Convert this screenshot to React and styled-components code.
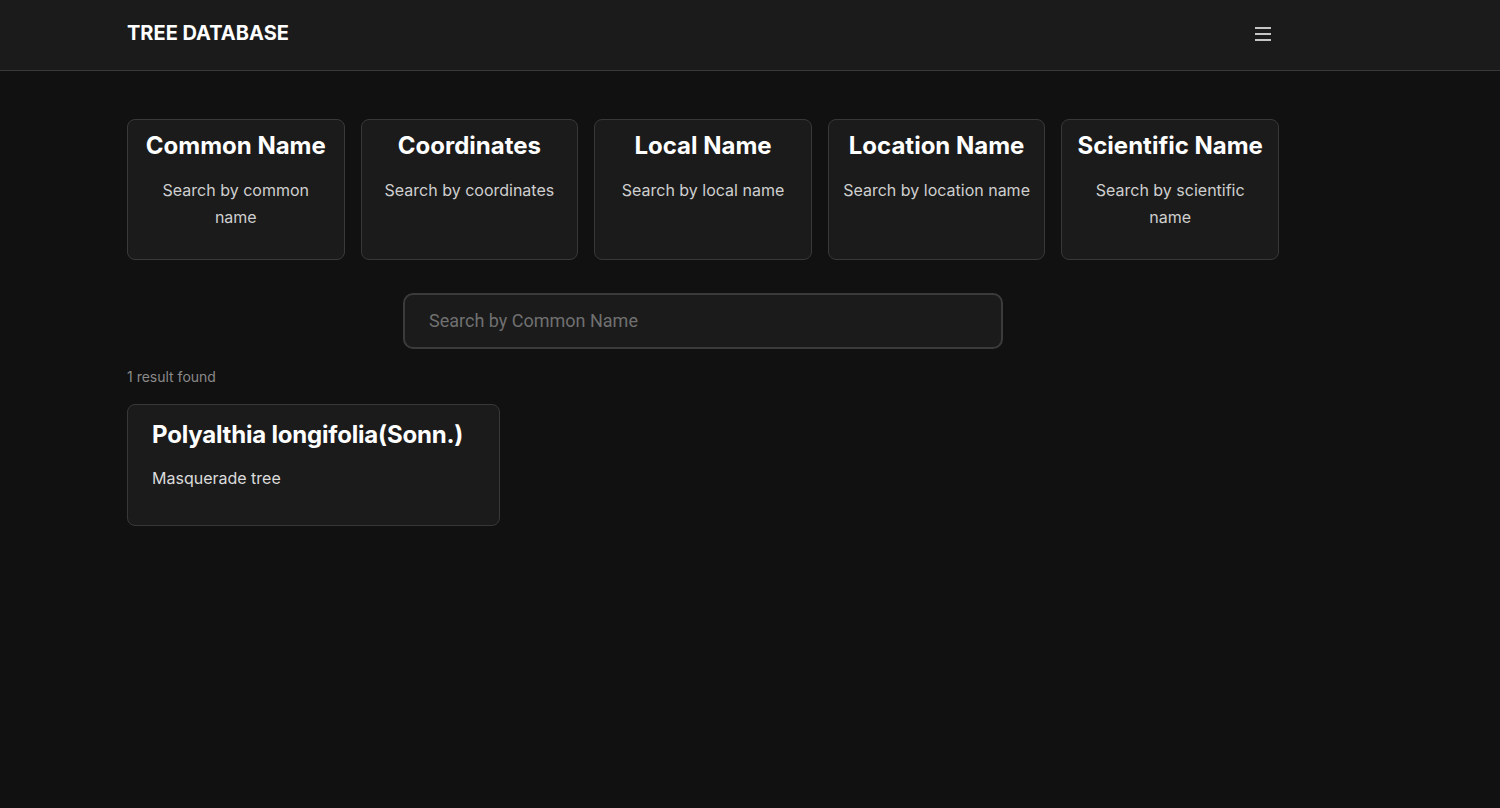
import React, {useState} from 'react';
import styled, {createGlobalStyle} from 'styled-components';

const GlobalStyle = createGlobalStyle`
  * { box-sizing: border-box; }
  html, body {
    margin: 0;
    padding: 0;
    background: #111111;
    color: #ffffff;
    font-family: 'Inter', 'Noto Sans', sans-serif;
  }
`;

const Page = styled.div`
  min-height: 808px;
  background: #111111;
`;

const Header = styled.header`
  height: 71px;
  background: #1b1b1b;
  border-bottom: 1px solid #383838;
`;

const Wrap = styled.div`
  width: 1152px;
  margin-left: 127px;
`;

const HeaderRow = styled(Wrap)`
  height: 70px;
  display: flex;
  align-items: center;
  justify-content: space-between;
`;

const Brand = styled.div`
  font-size: 20px;
  font-weight: 700;
  margin-top: -4px;
`;

const MenuButton = styled.button`
  background: none;
  border: 0;
  padding: 6px 8px;
  margin-top: -2px;
  color: #fff;
  cursor: pointer;
  display: flex;
`;

const Main = styled(Wrap)`
  padding-top: 48px;
`;

const Filters = styled.div`
  display: grid;
  grid-template-columns: repeat(5, 1fr);
  gap: 16px;
`;

const FilterCard = styled.button`
  background: #1b1b1b;
  border: 1px solid ${p => (p.$active ? '#3a3a3a' : '#383838')};
  border-radius: 8px;
  padding: 14px 12px 27px;
  text-align: center;
  color: #fff;
  font-family: inherit;
  cursor: pointer;
  display: flex;
  flex-direction: column;
  align-items: center;
  min-height: 141px;
`;

const FilterTitle = styled.h3`
  margin: 0;
  font-size: 24px;
  line-height: 24px;
  font-weight: 700;
  white-space: nowrap;
`;

const FilterText = styled.p`
  margin: 19px 0 0;
  font-size: 16px;
  line-height: 27px;
  color: #cfcfcf;
`;

const SearchBox = styled.input`
  display: block;
  width: 600px;
  height: 56px;
  margin: 33px auto 0;
  background: #1b1b1b;
  border: 2px solid #3b3b3b;
  border-radius: 10px;
  padding: 0 24px 2px;
  color: #fff;
  font-family: 'Roboto', 'Liberation Sans', sans-serif;
  font-size: 18px;
  outline: none;
  &::placeholder { color: #707070; }
`;

const Count = styled.div`
  margin-top: 19px;
  font-size: 14px;
  color: #8a8a8a;
`;

const Results = styled.div`
  margin-top: 19px;
  display: grid;
  grid-template-columns: repeat(3, 1fr);
  gap: 16px;
`;

const ResultCard = styled.div`
  background: #1b1b1b;
  border: 1px solid #383838;
  border-radius: 8px;
  padding: 15px 24px 30px;
  min-height: 122px;
`;

const ResultTitle = styled.h2`
  margin: 0;
  font-size: 24px;
  line-height: 29px;
  font-weight: 700;
  letter-spacing: -0.2px;
`;

const ResultText = styled.p`
  margin: 17px 0 0;
  font-size: 16px;
  line-height: 24px;
  color: #dcdcdc;
`;

const filters = [
  {key: 'common', title: 'Common Name', text: 'Search by common name'},
  {key: 'coords', title: 'Coordinates', text: 'Search by coordinates'},
  {key: 'local', title: 'Local Name', text: 'Search by local name'},
  {key: 'location', title: 'Location Name', text: 'Search by location name'},
  {key: 'scientific', title: 'Scientific Name', text: 'Search by scientific name'},
];

const trees = [
  {name: 'Polyalthia longifolia(Sonn.)', common: 'Masquerade tree'},
];

const MenuIcon = () => (
  <svg width="16" height="14" viewBox="0 0 16 14">
    <g stroke="#f2f2f2" strokeWidth="1.6">
      <line x1="0" y1="1" x2="16" y2="1" />
      <line x1="0" y1="7" x2="16" y2="7" />
      <line x1="0" y1="13" x2="16" y2="13" />
    </g>
  </svg>
);

export default function App() {
  const [mode, setMode] = useState('common');
  const [query, setQuery] = useState('');

  return (
    <Page>
      <GlobalStyle />
      <Header>
        <HeaderRow>
          <Brand>TREE DATABASE</Brand>
          <MenuButton aria-label="menu">
            <MenuIcon />
          </MenuButton>
        </HeaderRow>
      </Header>
      <Main>
        <Filters>
          {filters.map(f => (
            <FilterCard key={f.key} $active={mode === f.key} onClick={() => setMode(f.key)}>
              <FilterTitle>{f.title}</FilterTitle>
              <FilterText>{f.text}</FilterText>
            </FilterCard>
          ))}
        </Filters>
        <SearchBox
          placeholder="Search by Common Name"
          value={query}
          onChange={e => setQuery(e.target.value)}
        />
        <Count>{trees.length} result found</Count>
        <Results>
          {trees.map(t => (
            <ResultCard key={t.name}>
              <ResultTitle>{t.name}</ResultTitle>
              <ResultText>{t.common}</ResultText>
            </ResultCard>
          ))}
        </Results>
      </Main>
    </Page>
  );
}
